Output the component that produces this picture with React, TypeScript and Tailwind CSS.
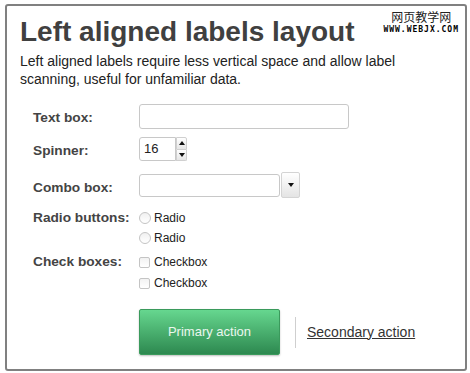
import React from 'react';

const labelCls = 'w-[106px] shrink-0 text-[13.7px] leading-[16px] font-bold text-[#444]';

const Arrow: React.FC<{ up?: boolean }> = ({ up }) => (
  <svg width="6" height="4" viewBox="0 0 6 4" className="block">
    <path d={up ? 'M0 4 L3 0 L6 4 Z' : 'M0 0 L6 0 L3 4 Z'} fill="#111" />
  </svg>
);

const App: React.FC = () => {
  return (
    <div className="w-[470px] h-[373px] bg-white pt-[4px] pl-[5px]" style={{ fontFamily: '"Liberation Sans", Arial, sans-serif' }}>
      <div className="relative w-[462px] h-[367px] border-2 border-[#808080] rounded-[3px] pt-[10px] pl-[13px]">
        {/* watermark */}
        <div className="absolute top-[3px] right-[6px] flex flex-col items-center">
          <span className="text-[12px] leading-[15px] text-[#222]" style={{ fontFamily: '"Noto Sans CJK SC", sans-serif' }}>网页教学网</span>
          <span className="mt-[2px] text-[8px] leading-[8px] font-bold tracking-[1px] text-black" style={{ fontFamily: '"DejaVu Sans Mono", monospace' }}>WWW.WEBJX.COM</span>
        </div>

        <h1 className="text-[28px] leading-[32px] font-bold text-[#404040]">Left aligned labels layout</h1>
        <p className="mt-[4px] max-w-[420px] text-[14px] leading-[18px] text-[#222]">
          Left aligned labels require less vertical space and allow label scanning, useful for unfamiliar data.
        </p>

        <div className="ml-[13px] mt-[16px]">
          {/* Text box */}
          <div className="flex">
            <label className={`${labelCls} pt-[6px]`}>Text box:</label>
            <div className="w-[210px] h-[25px] border border-[#c8c8c8] rounded-[3px] bg-white" />
          </div>

          {/* Spinner */}
          <div className="flex mt-[8px]">
            <label className={`${labelCls} pt-[6px]`}>Spinner:</label>
            <div className="flex h-[24px]">
              <div className="w-[37px] h-full border border-[#c8c8c8] rounded-l-[3px] bg-white pl-[4px] text-[13px] leading-[22px] text-[#222]">16</div>
              <div className="flex flex-col w-[11px] h-full">
                <div className="flex-1 flex items-center justify-center border border-[#d0d0d0] rounded-tr-[2px] bg-linear-to-b from-white to-[#e6e6e6]">
                  <Arrow up />
                </div>
                <div className="flex-1 flex items-center justify-center border border-t-0 border-[#d0d0d0] rounded-br-[2px] bg-linear-to-b from-white to-[#e6e6e6]">
                  <Arrow />
                </div>
              </div>
            </div>
          </div>

          {/* Combo box */}
          <div className="flex mt-[11px]">
            <label className={`${labelCls} pt-[8px]`}>Combo box:</label>
            <div className="flex items-center h-[26px]">
              <div className="w-[141px] h-[23px] border border-[#c8c8c8] rounded-[3px] bg-white" />
              <div className="ml-[1px] w-[19px] h-[26px] flex items-center justify-center border border-[#d4d4d4] rounded-[2px] bg-linear-to-b from-white to-[#e4e4e4]">
                <Arrow />
              </div>
            </div>
          </div>

          {/* Radio buttons */}
          <div className="flex mt-[10px]">
            <label className={`${labelCls} pt-[2px]`}>Radio buttons:</label>
            <div className="flex flex-col">
              {['Radio', 'Radio'].map((t, i) => (
                <div key={i} className="flex items-center h-[20px]">
                  <span className="w-[12px] h-[12px] rounded-full border border-[#c4c4c4] bg-linear-to-b from-[#f0f0f0] to-white" />
                  <span className="ml-[3px] text-[12px] leading-[20px] text-[#222]">{t}</span>
                </div>
              ))}
            </div>
          </div>

          {/* Check boxes */}
          <div className="flex mt-[4px]">
            <label className={`${labelCls} pt-[2px]`}>Check boxes:</label>
            <div className="flex flex-col">
              {['Checkbox', 'Checkbox'].map((t, i) => (
                <div key={i} className="flex items-center h-[21px]">
                  <span className="w-[11px] h-[11px] rounded-[2px] border border-[#c4c4c4] bg-linear-to-b from-[#f2f2f2] to-white" />
                  <span className="ml-[4px] text-[12px] leading-[21px] text-[#222]">{t}</span>
                </div>
              ))}
            </div>
          </div>

          {/* Actions */}
          <div className="flex items-center mt-[15px] ml-[106px]">
            <button className="w-[141px] h-[46px] rounded-[2px] border border-[#3a9a5c] bg-linear-to-b from-[#66d78f] to-[#2d8950] text-[13px] text-[#eaf7ee] shadow-[0_1px_2px_rgba(0,0,0,0.25)]">
              Primary action
            </button>
            <div className="ml-[15px] w-px h-[31px] bg-[#cfcfcf]" />
            <a href="#" className="ml-[11px] text-[14px] text-[#333] underline">Secondary action</a>
          </div>
        </div>
      </div>
    </div>
  );
};

export default App;
